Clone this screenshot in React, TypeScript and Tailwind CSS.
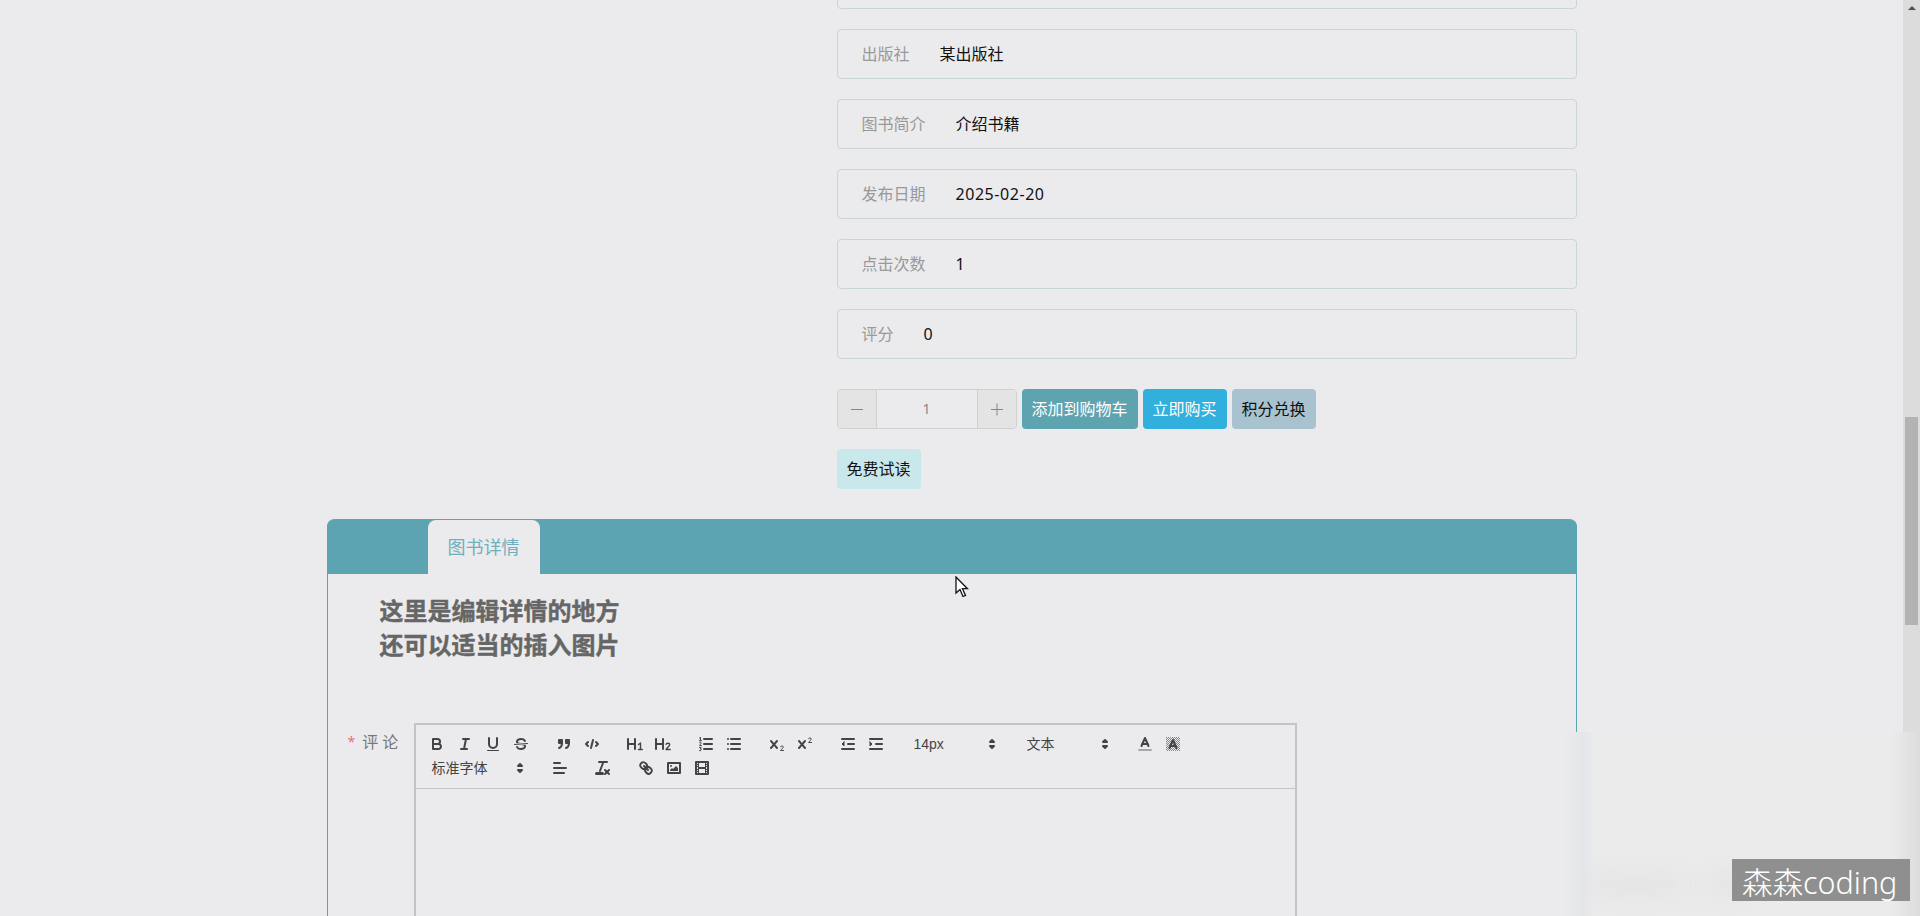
import type { ReactNode } from 'react'

const fields: { label: string; value: string; wide?: boolean }[] = [
  { label: '出版社', value: '某出版社' },
  { label: '图书简介', value: '介绍书籍' },
  { label: '发布日期', value: '2025-02-20', wide: true },
  { label: '点击次数', value: '1' },
  { label: '评分', value: '0' },
]

function Ico({ children }: { children: ReactNode }) {
  return (
    <span className="flex h-6 w-7 items-center justify-center">
      <svg viewBox="0 0 18 18" className="h-[18px] w-[18px]" fill="none" stroke="#444" strokeWidth="2" strokeLinecap="round" strokeLinejoin="round">
        {children}
      </svg>
    </span>
  )
}

function Picker({ label, w }: { label: string; w: string }) {
  return (
    <span className={`relative mr-[15px] flex h-6 items-center pl-[9px] text-sm text-[#444] font-['Liberation_Sans','Noto_Sans_CJK_SC',sans-serif] ${w}`}>
      {label}
      <svg viewBox="0 0 18 18" className="absolute right-0.5 top-[3px] h-[18px] w-[18px]" fill="#444" stroke="#444" strokeWidth="2" strokeLinejoin="round">
        <polygon points="7 11 9 13 11 11 7 11" />
        <polygon points="7 7 9 5 11 7 7 7" />
      </svg>
    </span>
  )
}

const X_MARK =
  'M9.65,5.241a1,1,0,0,0-1.409.108L6,7.964,3.759,5.349A1,1,0,0,0,2.192,6.592q.024.03.049.057L4.684,9.5,2.241,12.35A1,1,0,0,0,3.71,13.707q.026-.028.049-.057L6,11.036,8.241,13.65a1,1,0,1,0,1.567-1.243q-.024-.03-.049-.057L7.316,9.5,9.759,6.651A1,1,0,0,0,9.65,5.241Z'

function Toolbar() {
  return (
    <div className="flex flex-wrap border-b border-[#c4c4c4] pb-2 pl-[7px] pr-2 pt-[7px]">
      <div className="mr-[15px] flex">
        <Ico>
          <path d="M5,4H9.5A2.5,2.5,0,0,1,12,6.5v0A2.5,2.5,0,0,1,9.5,9H5V4Z" />
          <path d="M5,9h5.5A2.5,2.5,0,0,1,13,11.5v0A2.5,2.5,0,0,1,10.5,14H5V9Z" />
        </Ico>
        <Ico>
          <line x1="7" x2="13" y1="4" y2="4" />
          <line x1="5" x2="11" y1="14" y2="14" />
          <line x1="8" x2="10" y1="14" y2="4" />
        </Ico>
        <Ico>
          <path d="M5,3V9a4.012,4.012,0,0,0,4,4H9a4.012,4.012,0,0,0,4-4V3" />
          <rect x="3" y="15" width="12" height="1" rx=".5" fill="#444" stroke="none" />
        </Ico>
        <Ico>
          <line x1="15.5" x2="2.5" y1="8.5" y2="9.5" strokeWidth="1" />
          <path fill="#444" stroke="none" d="M9.007,8C6.542,7.791,6,7.519,6,6.5,6,5.792,7.283,5,9,5c1.571,0,2.765.679,2.969,1.309a1,1,0,0,0,1.9-.617C13.356,4.106,11.354,3,9,3,6.2,3,4,4.538,4,6.5a3.2,3.2,0,0,0,.5,1.843Z" />
          <path fill="#444" stroke="none" d="M8.984,10C11.457,10.208,12,10.479,12,11.5c0,.708-1.283,1.5-3,1.5-1.571,0-2.765-.679-2.969-1.309a1,1,0,1,0-1.9.617C4.644,13.894,6.646,15,9,15c2.8,0,5-1.538,5-3.5a3.2,3.2,0,0,0-.5-1.843Z" />
        </Ico>
      </div>
      <div className="mr-[15px] flex">
        <Ico>
          <rect x="4" y="5" width="3" height="3" fill="#444" />
          <rect x="11" y="5" width="3" height="3" fill="#444" />
          <path d="M7,8c0,4.031-3,5-3,5" />
          <path d="M14,8c0,4.031-3,5-3,5" />
        </Ico>
        <Ico>
          <polyline points="5 7 3 9 5 11" />
          <polyline points="13 7 15 9 13 11" />
          <line x1="10" x2="8" y1="5" y2="13" />
        </Ico>
      </div>
      <div className="mr-[15px] flex">
        <Ico>
          <path d="M2,4V14M9,4V14M2,9H9" />
          <path d="M12.5,9.5L14.5,8V14M12.5,14.5H16.3" strokeWidth="1.4" />
        </Ico>
        <Ico>
          <path d="M2,4V14M9,4V14M2,9H9" />
          <path d="M12,9.3C12.4,7.8,15.7,7.7,15.7,9.7C15.7,11.3,13,12.6,12,14.5H16.2" strokeWidth="1.4" />
        </Ico>
      </div>
      <div className="mr-[15px] flex">
        <Ico>
          <line x1="7" x2="15" y1="4" y2="4" />
          <line x1="7" x2="15" y1="9" y2="9" />
          <line x1="7" x2="15" y1="14" y2="14" />
          <path d="M2.5,3L3.5,2.4V5.5M2.5,5.7H4.5" strokeWidth="1" />
          <path d="M2.5,7.6C3,7,4.4,7.3,4.2,8.2C4,9,2.8,9.7,2.5,10.6H4.5" strokeWidth="1" />
          <path d="M2.5,12.6H4.3L3.3,14C4.8,14,4.8,16,2.5,15.7" strokeWidth="1" />
        </Ico>
        <Ico>
          <line x1="6" x2="15" y1="4" y2="4" />
          <line x1="6" x2="15" y1="9" y2="9" />
          <line x1="6" x2="15" y1="14" y2="14" />
          <line x1="3" x2="3" y1="4" y2="4" />
          <line x1="3" x2="3" y1="9" y2="9" />
          <line x1="3" x2="3" y1="14" y2="14" />
        </Ico>
      </div>
      <div className="mr-[15px] flex">
        <Ico>
          <path d={X_MARK} fill="#444" stroke="none" />
          <path d="M12.5,11.8C12.8,10.6,15.2,10.5,15.2,12C15.2,13.2,13.3,14.3,12.5,15.5H15.5" strokeWidth="1" />
        </Ico>
        <Ico>
          <path d={X_MARK} fill="#444" stroke="none" />
          <path d="M12.5,3.8C12.8,2.6,15.2,2.5,15.2,4C15.2,5.2,13.3,6.3,12.5,7.5H15.5" strokeWidth="1" />
        </Ico>
      </div>
      <div className="mr-[15px] flex">
        <Ico>
          <line x1="3" x2="15" y1="14" y2="14" />
          <line x1="3" x2="15" y1="4" y2="4" />
          <line x1="9" x2="15" y1="9" y2="9" />
          <polygon points="5 7 5 11 3 9 5 7" fill="#444" strokeWidth="1" />
        </Ico>
        <Ico>
          <line x1="3" x2="15" y1="14" y2="14" />
          <line x1="3" x2="15" y1="4" y2="4" />
          <line x1="9" x2="15" y1="9" y2="9" />
          <polygon points="3 7 3 11 5 9 3 7" fill="#444" strokeWidth="1" />
        </Ico>
      </div>
      <Picker label="14px" w="w-[98px]" />
      <Picker label="文本" w="w-[98px]" />
      <div className="mr-[15px] flex">
        <Ico>
          <line x1="3" x2="15" y1="15" y2="15" stroke="#a8a8a8" />
          <polyline points="5.5 11 9 3 12.5 11" />
          <line x1="11.63" x2="6.38" y1="9" y2="9" />
        </Ico>
        <Ico>
          <defs>
            <pattern id="dither" width="2" height="2" patternUnits="userSpaceOnUse">
              <rect width="1" height="1" fill="#888" stroke="none" />
              <rect x="1" y="1" width="1" height="1" fill="#888" stroke="none" />
            </pattern>
          </defs>
          <rect x="2" y="2" width="14" height="14" fill="url(#dither)" stroke="none" />
          <polyline points="5.5 13 9 5 12.5 13" />
          <line x1="11.63" x2="6.38" y1="11" y2="11" />
        </Ico>
      </div>
      <Picker label="标准字体" w="w-[108px]" />
      <div className="mr-[15px] flex">
        <Ico>
          <line x1="3" x2="15" y1="9" y2="9" />
          <line x1="3" x2="13" y1="14" y2="14" />
          <line x1="3" x2="9" y1="4" y2="4" />
        </Ico>
      </div>
      <div className="mr-[15px] flex">
        <Ico>
          <line x1="5" x2="13" y1="3" y2="3" />
          <line x1="6" x2="9.35" y1="12" y2="3" />
          <line x1="11" x2="15" y1="11" y2="15" />
          <line x1="15" x2="11" y1="11" y2="15" />
          <rect x="2" y="14" width="7" height="1" rx=".5" fill="#444" />
        </Ico>
      </div>
      <div className="flex">
        <Ico>
          <line x1="7" x2="11" y1="7" y2="11" />
          <path d="M8.9,4.577a3.476,3.476,0,0,1,.36,4.679A3.476,3.476,0,0,1,4.577,8.9C3.185,7.5,2.035,6.4,4.217,4.217S7.5,3.185,8.9,4.577Z" />
          <path d="M13.423,9.1a3.476,3.476,0,0,0-4.679-.36,3.476,3.476,0,0,0,.36,4.679c1.392,1.392,2.5,2.542,4.679.36S14.815,10.5,13.423,9.1Z" />
        </Ico>
        <Ico>
          <rect x="3" y="4" width="12" height="10" />
          <circle cx="6" cy="7" r="1" fill="#444" stroke="none" />
          <polyline points="5 12 5 11 7 9 8 10 11 7 13 9 13 12 5 12" fill="#444" stroke="none" />
        </Ico>
        <Ico>
          <rect x="3" y="3" width="12" height="12" />
          <rect x="5" y="3" width="1" height="12" fill="#444" stroke="none" />
          <rect x="12" y="3" width="1" height="12" fill="#444" stroke="none" />
          <rect x="5" y="8" width="8" height="2" fill="#444" stroke="none" />
          <rect x="3" y="5" width="3" height="1" fill="#444" stroke="none" />
          <rect x="3" y="7" width="3" height="1" fill="#444" stroke="none" />
          <rect x="3" y="10" width="3" height="1" fill="#444" stroke="none" />
          <rect x="3" y="12" width="3" height="1" fill="#444" stroke="none" />
          <rect x="12" y="5" width="3" height="1" fill="#444" stroke="none" />
          <rect x="12" y="7" width="3" height="1" fill="#444" stroke="none" />
          <rect x="12" y="10" width="3" height="1" fill="#444" stroke="none" />
          <rect x="12" y="12" width="3" height="1" fill="#444" stroke="none" />
        </Ico>
      </div>
    </div>
  )
}

export default function App() {
  return (
    <div className="relative flex h-[916px] overflow-hidden bg-[#ebebed] font-['Noto_Sans','Noto_Sans_CJK_SC',sans-serif]">
      <main className="min-w-0 flex-1">
        <div className="mx-auto w-[1250px]">
          {/* product fields, scrolled part way */}
          <div className="-mt-[41px] ml-[510px] flex w-[740px] flex-col gap-5">
            <div className="h-[50px] rounded border border-[#c9d5d6]" />
            {fields.map((f) => (
              <div key={f.label} className="flex h-[50px] items-center gap-[30px] rounded border border-[#c9d5d6] pl-6 text-base">
                <span className="text-[#999]">{f.label}</span>
                <span className={f.wide ? 'tracking-[0.55px] text-[#111]' : 'text-[#111]'}>{f.value}</span>
              </div>
            ))}
            <div className="mt-2.5 flex gap-[5px]">
              <div className="flex h-10 w-[180px] overflow-hidden rounded border border-[#d0d0d0] text-[#888]">
                <span className="flex w-[39px] items-center justify-center border-r border-[#d0d0d0] bg-[#e4e4e4]">
                  <svg viewBox="0 0 14 14" className="h-3.5 w-3.5" stroke="#888" strokeWidth="1">
                    <path d="M1,7.5H13" />
                  </svg>
                </span>
                <span className="flex flex-1 items-center justify-center text-sm">1</span>
                <span className="flex w-[39px] items-center justify-center border-l border-[#d0d0d0] bg-[#e4e4e4]">
                  <svg viewBox="0 0 14 14" className="h-3.5 w-3.5" stroke="#888" strokeWidth="1">
                    <path d="M1,7.5H13M7,1.5V13.5" />
                  </svg>
                </span>
              </div>
              <button className="h-10 w-[116px] rounded bg-[#5ea4b0] pb-px text-base text-white">添加到购物车</button>
              <button className="h-10 w-[84px] rounded bg-[#31b0dd] pb-px text-base text-white">立即购买</button>
              <button className="h-10 w-[84px] rounded bg-[#a8c3cf] pb-px text-base text-[#111]">积分兑换</button>
            </div>
            <button className="h-10 w-[84px] rounded bg-[#c9e8ec] text-base text-[#111]">免费试读</button>
          </div>

          {/* detail tabs */}
          <section className="mt-[30px] rounded-t-lg border-x border-[#5ca4b1]">
            <div className="-mx-px flex h-[55px] items-end rounded-t-lg bg-[#5ca4b1] pl-[101px]">
              <div className="flex h-[54px] w-28 items-center justify-center rounded-t-lg bg-[#ebebed] text-lg text-[#6fb0bc]">图书详情</div>
            </div>
            <div className="pl-[52px] pt-5 text-2xl font-bold leading-[34px] text-[#666] [-webkit-text-stroke:0.4px_#666]">
              <p>这里是编辑详情的地方</p>
              <p>还可以适当的插入图片</p>
            </div>
            <div className="mt-[61px] flex pl-5">
              <div className="flex h-[38px] w-[66px] items-center text-base text-[#777]">
                <span className="mr-[7px] text-sm text-[#e57373]">*</span>
                <span className="tracking-[4px]">评论</span>
              </div>
              <div className="h-[500px] w-[883px] border-2 border-[#c4c4c4]">
                <Toolbar />
              </div>
            </div>
          </section>
        </div>
      </main>

      {/* scrollbar */}
      <aside className="flex w-[17px] flex-col items-center bg-[#dcdcdc]">
        <span className="mt-1.5 h-0 w-0 border-x-[4px] border-b-[4px] border-x-transparent border-b-[#505050]" />
        <span className="mt-[407px] h-52 w-[13px] bg-[#b3b3b3]" />
      </aside>

      {/* blurred patch of the video over the lower right corner */}
      <div className="absolute bottom-0 left-[1561px] right-0 top-[732px] bg-[linear-gradient(90deg,#ebebed_0px,#e8e9eb_10px,#e5e6e9_22px,#ebebec_34px,#ebebeb_330px,#dcdcdc_359px)]">
        <div className="absolute left-[30px] top-[146px] h-[14px] w-[90px] rounded-full bg-[#e0e0e0] blur-md" />
        <div className="absolute left-[145px] top-[146px] h-[14px] w-[40px] rounded-full bg-[#e0e0e0] blur-md" />
      </div>

      {/* watermark */}
      <div className="absolute left-[1732px] top-[859px] h-[42px] w-[178px] bg-[#8f8f8f] pl-[10px] text-[30.5px] font-light leading-[47px] whitespace-nowrap text-white">
        森森coding
      </div>

      {/* mouse pointer */}
      <svg viewBox="0 0 14 22" className="absolute left-[955px] top-[576px] h-[22px] w-[14px]" fill="#fff" stroke="#111" strokeWidth="1.3">
        <path d="M1,1V17L5,13.5L8,20.5L10.5,19.5L7.5,12.7H12.5Z" />
      </svg>
    </div>
  )
}
